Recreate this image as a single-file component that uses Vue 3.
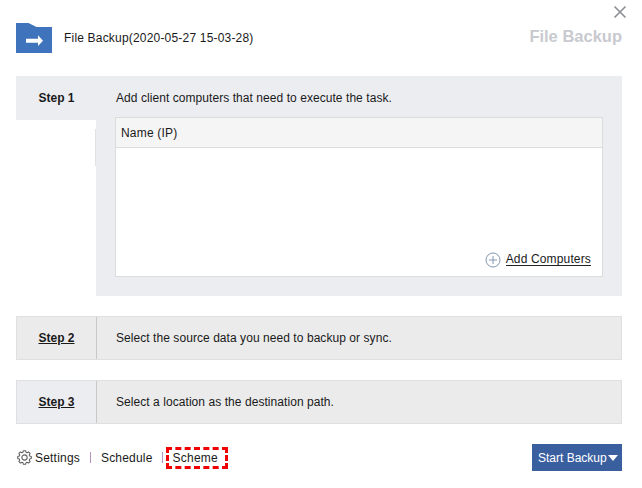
<template>
  <div class="dialog">
    <button class="close" aria-label="Close">
      <svg width="14" height="14" viewBox="0 0 14 14">
        <path d="M1.500 1.500 12.500 12.500M12.500 1.500 1.500 12.500" stroke="#8b8e94" stroke-width="1.6" fill="none" />
      </svg>
    </button>

    <header class="head">
      <svg class="folder" width="36" height="30" viewBox="0 0 36 30">
        <path d="M0 0H12.500L20.500 4H36V30H0Z" fill="#3f73bb" />
        <path d="M10 15.700H22V12.300L27 17.700 22 23V19.700H10Z" fill="#fff" />
      </svg>
      <span class="task-name">{{ taskName }}</span>
      <span class="kind">File Backup</span>
    </header>

    <section class="step-open">
      <div class="side">
        <div class="tab">Step 1</div>
        <div class="tab-rest"></div>
      </div>
      <div class="panel">
        <p class="hint">Add client computers that need to execute the task.</p>
        <div class="table">
          <div class="table-head">Name (IP)</div>
          <div class="table-body">
            <a class="add">
              <svg width="16" height="16" viewBox="0 0 16 16">
                <circle cx="8" cy="8" r="7" stroke="#8298b0" fill="none" />
                <path d="M8 4V12M4 8H12" stroke="#8298b0" fill="none" />
              </svg>
              <span>Add Computers</span>
            </a>
          </div>
        </div>
      </div>
    </section>

    <section v-for="step in closedSteps" :key="step.name" class="step-closed">
      <div class="step-name" :class="step.tone">{{ step.name }}</div>
      <div class="step-text">{{ step.text }}</div>
    </section>

    <footer class="foot">
      <nav class="links">
        <svg class="gear" width="15" height="15" viewBox="0 0 24 24" fill="none" stroke="#5f5f5f" stroke-width="1.700">
          <circle cx="12" cy="12" r="4.200" />
          <path :d="gearPath" stroke-linejoin="round" />
        </svg>
        <span class="link">Settings</span>
        <i class="sep first"></i>
        <span class="link">Schedule</span>
        <i class="sep second"></i>
        <span class="link scheme">Scheme</span>
      </nav>
      <button class="start">Start Backup<i class="caret"></i></button>
    </footer>
  </div>
</template>

<script setup>
const taskName = "File Backup(2020-05-27 15-03-28)";

const closedSteps = [
  { name: "Step 2", text: "Select the source data you need to backup or sync.", tone: "flat" },
  { name: "Step 3", text: "Select a location as the destination path.", tone: "cool" },
];

// eight toothed gear outline
const gearPoints = [];
for (let i = 0; i < 8; i++) {
  const mid = (i * Math.PI) / 4;
  for (const [off, r] of [[-0.3, 8.6], [-0.16, 11], [0.16, 11], [0.3, 8.6]]) {
    const x = 12 + r * Math.cos(mid + off);
    const y = 12 + r * Math.sin(mid + off);
    gearPoints.push(`${x.toFixed(2)} ${y.toFixed(2)}`);
  }
}
const gearPath = `M${gearPoints.join("L")}Z`;
</script>

<style>
html,
body {
  margin: 0;
  background: #fff;
}
</style>

<style scoped>
.dialog {
  position: relative;
  box-sizing: border-box;
  width: 642px;
  height: 488px;
  padding: 23px 20px 0 16px;
  background: #fff;
  color: #1a1a1a;
  font-family: "Liberation Sans", Arial, sans-serif;
  font-size: 12px;
  letter-spacing: 0.06px;
}
.close {
  position: absolute;
  top: 5px;
  right: 15px;
  display: flex;
  padding: 0;
  border: 0;
  background: none;
}
.head {
  display: flex;
  align-items: center;
  height: 30px;
  margin-bottom: 23px;
}
.folder {
  margin-right: 12px;
}
.task-name {
  flex: 1;
  letter-spacing: 0.19px;
}
.kind {
  margin-top: -3px;
  color: #c8cad0;
  font-size: 16.5px;
  font-weight: 700;
  letter-spacing: 0;
}
.step-open {
  display: flex;
  height: 220px;
  margin-bottom: 20px;
}
.side {
  display: flex;
  flex-direction: column;
  width: 80px;
}
.tab {
  box-sizing: border-box;
  height: 44px;
  padding-left: 1px;
  background: #ecedf1;
  font-weight: 700;
  letter-spacing: 0;
  line-height: 44px;
  text-align: center;
}
.tab-rest {
  height: 37px;
  margin-top: 9px;
  border-right: 1px solid #e2e2e2;
}
.panel {
  flex: 1;
  box-sizing: border-box;
  padding: 0 19px 19px;
  background: #ecedf1;
}
.hint {
  height: 41px;
  margin: 0;
  padding-left: 1px;
  line-height: 44px;
}
.table {
  display: flex;
  flex-direction: column;
  box-sizing: border-box;
  height: 160px;
  border: 1px solid #dcdcdc;
  background: #fff;
}
.table-head {
  box-sizing: border-box;
  height: 30px;
  padding-left: 5px;
  border-bottom: 1px solid #dcdcdc;
  background: #f5f5f5;
  letter-spacing: 0.2px;
  line-height: 30px;
}
.table-body {
  display: flex;
  flex: 1;
  align-items: flex-end;
  justify-content: flex-end;
  padding: 0 11px 8px 0;
}
.add {
  display: flex;
  align-items: center;
  gap: 5px;
  letter-spacing: 0.15px;
}
.add svg {
  margin-top: 4px;
}
.add span {
  padding-top: 3px;
  border-bottom: 1px solid #222;
  line-height: 11px;
}
.step-closed {
  display: flex;
  box-sizing: border-box;
  height: 44px;
  margin-bottom: 20px;
  border: 1px solid #e0e0e0;
  background: #ebebeb;
}
.step-name {
  box-sizing: border-box;
  width: 80px;
  border-right: 1px solid #c8c8c8;
  font-weight: 700;
  letter-spacing: 0;
  line-height: 42px;
  text-align: center;
  text-decoration: underline;
}
.step-name.cool {
  background: #ecedf1;
}
.step-text {
  padding-left: 19px;
  line-height: 42px;
}
.foot {
  display: flex;
  align-items: center;
  justify-content: space-between;
  height: 27px;
  margin-top: 0;
}
.links {
  display: flex;
  align-items: center;
  letter-spacing: 0.2px;
}
.gear {
  margin: 0 3px 0 1px;
}
.sep {
  width: 1px;
  height: 11px;
  background: #b594bf;
}
.sep.first {
  margin: 0 10px 0 10px;
}
.sep.second {
  margin: 0 3px 0 9px;
}
.scheme {
  padding: 1px 7px 1px 4px;
  border: 3px dashed #f00000;
  line-height: 14px;
}
.start {
  display: flex;
  align-items: center;
  box-sizing: border-box;
  width: 90px;
  height: 27px;
  padding: 0 0 0 6px;
  border: 0;
  background: #3a5f9f;
  color: #fff;
  font: inherit;
  letter-spacing: 0;
}
.caret {
  width: 0;
  height: 0;
  margin-left: 1px;
  border-top: 6px solid #fff;
  border-right: 5px solid transparent;
  border-left: 5px solid transparent;
}
</style>
